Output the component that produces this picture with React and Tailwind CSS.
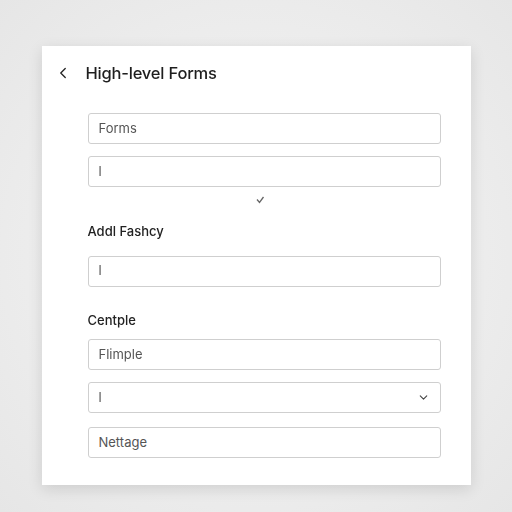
import { ChevronLeft, ChevronDown } from 'lucide-react'

function Field({ value, select, className = '' }) {
  return (
    <div
      className={`flex h-[31px] items-center justify-between rounded-[3px] border border-[#cfcfcf] bg-white pl-[10px] pr-[10px] text-[13px] text-[#555] ${className}`}
    >
      <span>{value}</span>
      {select && <ChevronDown size={13} strokeWidth={2} className="text-[#444]" />}
    </div>
  )
}

export default function App() {
  return (
    <div
      className="flex min-h-[512px] w-[512px] items-start justify-center pt-[46px]"
      style={{ fontFamily: 'Inter, "Noto Sans", sans-serif' }}
    >
      <div className="fixed inset-0 -z-10 bg-[radial-gradient(ellipse_at_center,#f6f6f6_0%,#ebebeb_70%,#e6e6e6_100%)]" />
      <div className="w-[429px] h-[439px] bg-white shadow-[0_4px_14px_rgba(0,0,0,0.12)] pl-[12px] pr-[30px] pt-[15px]">
        <div className="flex h-[24px] items-center">
          <ChevronLeft size={18} strokeWidth={1.75} className="text-[#222]" />
          <h1 className="ml-[14px] text-[16.5px] font-medium tracking-[-0.2px] text-[#1e1e1e]">High-level Forms</h1>
        </div>

        <div className="ml-[34px] mt-[28px] flex flex-col">
          <Field value="Forms" />
          <Field value="l" className="mt-[12px]" />
          <div className="mt-[7px] flex h-[12px] items-center justify-center pr-[8px]">
            <svg width="9" height="8" viewBox="0 0 9 8" fill="none" stroke="#666" strokeWidth="1.3">
              <path d="M1 3.5 L3.5 6.5 L7.5 1" />
            </svg>
          </div>
          <div className="mt-[16px] text-[13px] font-medium text-[#222]">Addl Fashcy</div>
          <Field value="l" className="mt-[14px]" />
          <div className="mt-[24px] text-[13px] font-medium text-[#222]">Centple</div>
          <Field value="Flimple" className="mt-[9px]" />
          <Field value="l" select className="mt-[12px]" />
          <Field value="Nettage" className="mt-[14px]" />
        </div>
      </div>
    </div>
  )
}
